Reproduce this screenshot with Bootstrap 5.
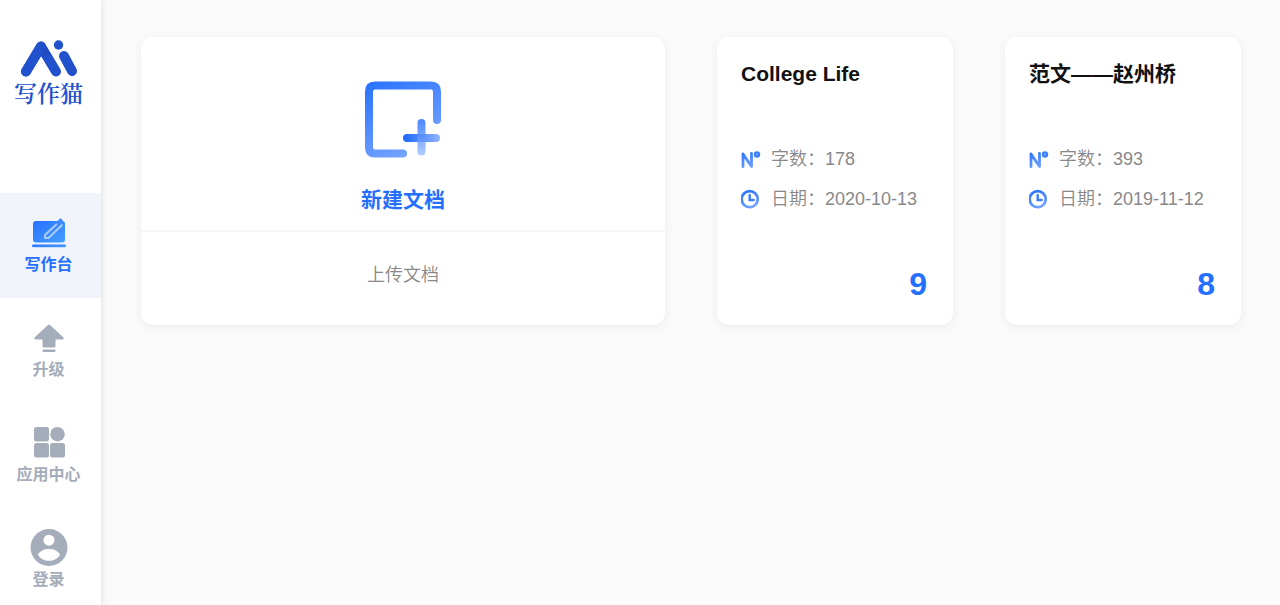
<!DOCTYPE html>
<html lang="zh-CN">
<head>
<meta charset="utf-8">
<meta name="viewport" content="width=device-width, initial-scale=1">
<title>写作猫</title>
<link href="https://cdn.jsdelivr.net/npm/bootstrap@5.3.0/dist/css/bootstrap.min.css" rel="stylesheet">
<style>
  :root { --brand: #256fff; --muted: #888; --idle: #a5acba; }
  body { background: #fafafa; font-family: "Liberation Sans", "Noto Sans CJK SC", sans-serif; }
  .sidebar { flex: 0 0 101px; background: #fff; box-shadow: 0 0 8px rgba(0, 0, 0, .12); overflow: hidden; }
  .brand { height: 193px; padding: 38px 4px 0 0; color: #2151cd; text-decoration: none; }
  .brand-name { font: 600 23px/26px "Noto Serif CJK SC", "Noto Serif SC", "Liberation Serif", "Noto Sans CJK SC", serif; }
  .side-link { height: 105px; padding: 20px 4px 0 0; color: var(--idle); font-size: 16px; font-weight: 700; line-height: 24px; }
  .side-link:hover { color: var(--brand); }
  .side-link.active { background: #f1f5fb; color: var(--brand); }
  .side-icon { height: 40px; }
  .board { display: grid; grid-template-columns: repeat(4, minmax(0, 1fr)); gap: 52px; padding: 37px 39px 37px 40px; }
  .tile { min-height: 288px; background: #fff; border: 0; border-radius: 12px; box-shadow: 0 2px 10px rgba(0, 0, 0, .06); }
  .tile-create { grid-column: span 2; }
  .tile-btn { background: none; border: 0; }
  .btn-new { height: 195px; padding-top: 40px; border-bottom: 2px solid #f7f7f7; color: var(--brand); font-size: 21px; font-weight: 700; line-height: 30px; }
  .btn-upload { padding-bottom: 8px; color: var(--muted); font-size: 18px; font-weight: 350; }
  .doc { padding: 22px 24px; color: #111; text-decoration: none; }
  .doc-title { margin-bottom: 50px; font-size: 21px; font-weight: 700; line-height: 30px; }
  .doc-meta { height: 40px; gap: 10px; color: var(--muted); font-size: 18px; font-weight: 350; }
  .doc-score { padding-right: 2px; color: var(--brand); font-size: 32px; font-weight: 700; line-height: 38px; }
  @media (max-width: 991px) {
    .board { grid-template-columns: repeat(2, minmax(0, 1fr)); gap: 24px; }
  }
</style>
</head>
<body>
<svg width="0" height="0" class="position-absolute" aria-hidden="true">
  <defs>
    <linearGradient id="gBlue" x1="0" y1="0" x2="1" y2="1"><stop offset="0" stop-color="#2670ff"/><stop offset="1" stop-color="#47a0ff"/></linearGradient>
    <linearGradient id="gDoc" gradientUnits="userSpaceOnUse" x1="10" y1="0" x2="50" y2="80"><stop offset="0" stop-color="#2670ff"/><stop offset="1" stop-color="#78a5ff"/></linearGradient>
    <linearGradient id="gSmall" gradientUnits="userSpaceOnUse" x1="6" y1="0" x2="14" y2="20"><stop offset="0" stop-color="#2670ff"/><stop offset="1" stop-color="#7ba8ff"/></linearGradient>
    <linearGradient id="gPlusH" gradientUnits="userSpaceOnUse" x1="39" y1="0" x2="75" y2="0"><stop offset="0" stop-color="#1d68ff"/><stop offset="1" stop-color="#8db4ff"/></linearGradient>
    <linearGradient id="gPlusV" gradientUnits="userSpaceOnUse" x1="0" y1="38" x2="0" y2="75"><stop offset="0" stop-color="#1d68ff"/><stop offset="1" stop-color="#9dbfff"/></linearGradient>
    <linearGradient id="gFold" gradientUnits="userSpaceOnUse" x1="22" y1="12" x2="30" y2="24"><stop offset="0" stop-color="#1a3f9e" stop-opacity=".7"/><stop offset="1" stop-color="#2151cd" stop-opacity="0"/></linearGradient>
    <symbol id="iCount" viewBox="0 0 20 20"><path d="M2 17.700V5L10.500 17.500V4.500" fill="none" stroke="url(#gSmall)" stroke-width="2.800" stroke-linecap="round" stroke-linejoin="round"/><circle cx="16" cy="5.500" r="3.200" fill="#3f82ff"/><circle cx="16" cy="5.500" r=".8" fill="#8cb3ff"/></symbol>
    <symbol id="iClock" viewBox="0 0 20 20"><circle cx="8.700" cy="10.200" r="8" fill="none" stroke="url(#gSmall)" stroke-width="2.700"/><path d="M8.700 6V11H12.700" fill="none" stroke="#3b7eff" stroke-width="2.400" stroke-linecap="round"/></symbol>
  </defs>
</svg>

<div class="d-flex min-vh-100">
  <aside class="sidebar vh-100 sticky-top">
    <a class="brand d-flex flex-column align-items-center" href="#">
      <svg width="60" height="42" viewBox="0 0 60 42" aria-hidden="true">
        <path d="M7 33.500L22 8.500L37 33.500M45 18L53 33" stroke="#2151cd" stroke-width="10" stroke-linecap="round" stroke-linejoin="round" fill="none"/>
        <path d="M23 10.500L30 22" stroke="url(#gFold)" stroke-width="9" stroke-linecap="round"/>
        <path d="M7 33.500L22 8.500" stroke="#2151cd" stroke-width="10" stroke-linecap="round"/>
        <circle cx="39.500" cy="7" r="4.700" fill="#2151cd"/>
      </svg>
      <span class="brand-name">写作猫</span>
    </a>
    <nav class="nav flex-column flex-nowrap" aria-label="主导航">
      <a class="nav-link side-link active d-flex flex-column align-items-center" href="#" aria-current="page">
        <svg class="side-icon flex-shrink-0" width="40" height="40" viewBox="0 0 40 40" aria-hidden="true">
          <rect x="4" y="8" width="32" height="21.500" rx="3" fill="url(#gBlue)"/>
          <path d="M30 9L16 22V25H19.500L33.500 11.500" fill="none" stroke="#a9cdff" stroke-width="2" stroke-linejoin="round"/>
          <path d="M29.500 10L31.500 8" stroke="#4289ff" stroke-width="4.500" stroke-linecap="round"/>
          <rect x="3" y="31.500" width="34" height="2.800" rx="1.200" fill="url(#gBlue)"/>
        </svg>
        <span>写作台</span>
      </a>
      <a class="nav-link side-link d-flex flex-column align-items-center" href="#">
        <svg class="side-icon flex-shrink-0" width="40" height="40" viewBox="0 0 40 40" fill="#a5acba" aria-hidden="true">
          <path d="M19 7Q20 6 21 7L34.500 19.500Q35.500 21.200 33.500 21.500H26.500V28Q26.500 29.500 25 29.500H15Q13.500 29.500 13.500 28V21.500H6.500Q4.500 21.200 5.500 19.500Z"/>
          <rect x="13.500" y="31.500" width="13" height="2.500" rx="1"/>
        </svg>
        <span>升级</span>
      </a>
      <a class="nav-link side-link d-flex flex-column align-items-center" href="#">
        <svg class="side-icon flex-shrink-0" width="40" height="40" viewBox="0 0 40 40" fill="#a5acba" aria-hidden="true">
          <rect x="5" y="4" width="15" height="14.500" rx="2.500"/><circle cx="28.500" cy="11.200" r="7.300"/>
          <rect x="5" y="20" width="15" height="14.500" rx="2.500"/><rect x="21" y="20" width="15" height="14.500" rx="2.500"/>
        </svg>
        <span>应用中心</span>
      </a>
      <a class="nav-link side-link d-flex flex-column align-items-center" href="#">
        <svg class="side-icon flex-shrink-0" width="40" height="40" viewBox="0 0 40 40" aria-hidden="true">
          <circle cx="20" cy="19.500" r="18.500" fill="#a5acba"/><circle cx="20" cy="12.200" r="5.500" fill="#fff"/>
          <path d="M9 26.500C11 23 15 21 20 21S29 23 31 26.500C29 30.500 25 32.800 20 32.800S11 30.500 9 26.500Z" fill="#fff"/>
        </svg>
        <span>登录</span>
      </a>
    </nav>
  </aside>

  <main class="flex-grow-1">
    <div class="board">
      <section class="tile tile-create d-flex flex-column">
        <button type="button" class="tile-btn btn-new d-flex flex-column align-items-center">
          <svg width="84" height="84" viewBox="0 0 84 84" class="mb-4" aria-hidden="true">
            <path d="M42 76.500H14Q8 76.500 8 70.500V14.500Q8 8.500 14 8.500H70Q76 8.500 76 14.500V43" fill="none" stroke="url(#gDoc)" stroke-width="8" stroke-linecap="round"/>
            <g transform="translate(3.500 3.500)" stroke-width="8" stroke-linecap="round" fill="none">
              <path d="M42.500 57.500H71.500" stroke="url(#gPlusH)"/>
              <path d="M57 42.500V71" stroke="url(#gPlusV)" stroke-opacity=".8"/>
            </g>
          </svg>
          <span>新建文档</span>
        </button>
        <button type="button" class="tile-btn btn-upload flex-grow-1">上传文档</button>
      </section>

      <a class="tile doc d-flex flex-column" href="#">
        <h2 class="doc-title text-truncate">College Life</h2>
        <div class="doc-meta d-flex align-items-center"><svg width="20" height="20" class="flex-shrink-0" aria-hidden="true"><use href="#iCount"/></svg><span class="text-nowrap">字数：178</span></div>
        <div class="doc-meta d-flex align-items-center"><svg width="20" height="20" class="flex-shrink-0" aria-hidden="true"><use href="#iClock"/></svg><span class="text-nowrap">日期：2020-10-13</span></div>
        <div class="doc-score mt-auto text-end">9</div>
      </a>

      <a class="tile doc d-flex flex-column" href="#">
        <h2 class="doc-title text-truncate">范文——赵州桥</h2>
        <div class="doc-meta d-flex align-items-center"><svg width="20" height="20" class="flex-shrink-0" aria-hidden="true"><use href="#iCount"/></svg><span class="text-nowrap">字数：393</span></div>
        <div class="doc-meta d-flex align-items-center"><svg width="20" height="20" class="flex-shrink-0" aria-hidden="true"><use href="#iClock"/></svg><span class="text-nowrap">日期：2019-11-12</span></div>
        <div class="doc-score mt-auto text-end">8</div>
      </a>
    </div>
  </main>
</div>
<script src="https://cdn.jsdelivr.net/npm/bootstrap@5.3.0/dist/js/bootstrap.bundle.min.js"></script>
</body>
</html>
